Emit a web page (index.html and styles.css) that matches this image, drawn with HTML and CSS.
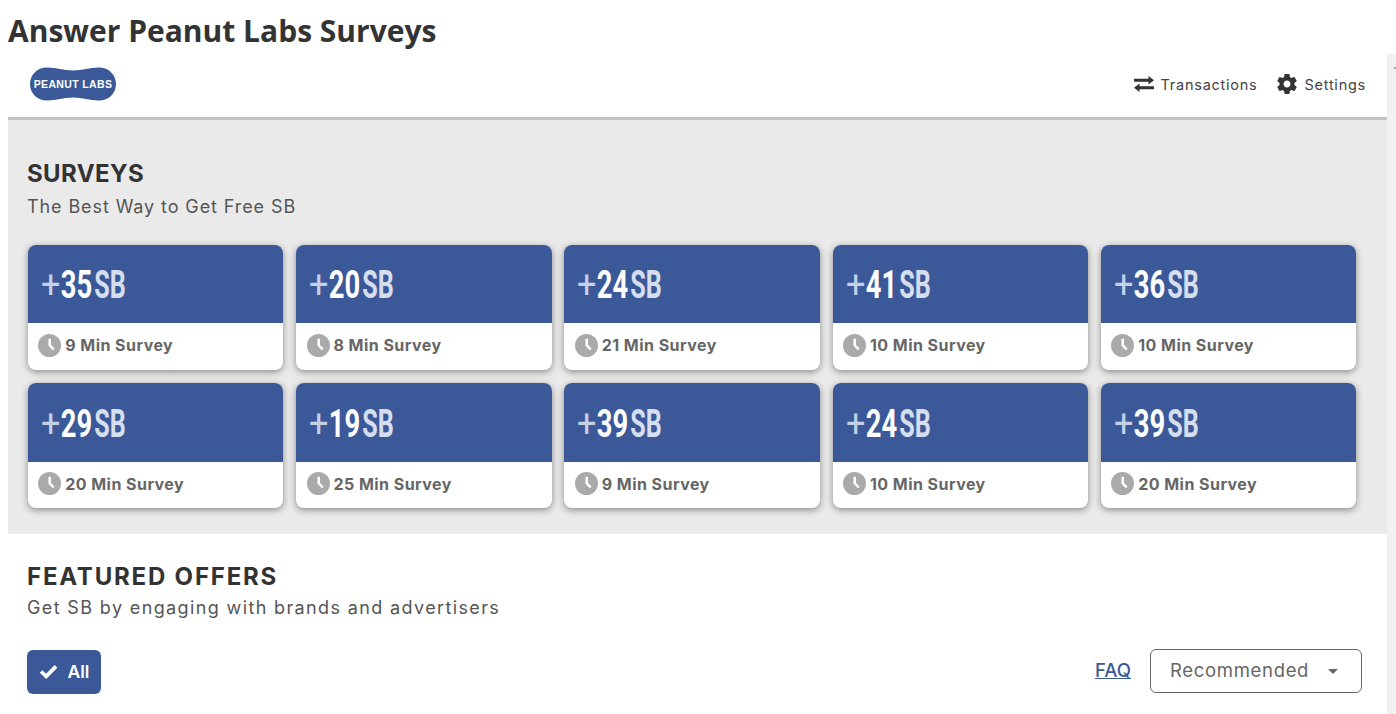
FILE: index.html
```html
<!DOCTYPE html>
<html lang="en">
<head>
<meta charset="utf-8">
<title>Answer Peanut Labs Surveys</title>
<link rel="stylesheet" href="styles.css">
</head>
<body>
<h1 class="page-title">Answer Peanut Labs Surveys</h1>
<div class="frame">
  <div class="frame-main">
    <header class="topbar">
      <svg class="logo" viewBox="0 0 86 34" role="img" aria-label="Peanut Labs">
        <path class="logo-shape" d="M17 0.5C27 0.5 33 3.5 43 3.5C53 3.5 59 0.5 69 0.5C79 0.5 86 8 86 17C86 26 79 33.5 69 33.5C59 33.5 53 30.5 43 30.5C33 30.5 27 33.5 17 33.5C7 33.5 0 26 0 17C0 8 7 0.5 17 0.5Z"/>
        <text class="logo-text" x="43" y="20.5" text-anchor="middle">PEANUT LABS</text>
      </svg>
      <nav class="topnav">
        <a class="topnav-link">
          <svg class="topnav-icon" viewBox="0 0 20 16"><path d="M14.5 0L20 4.3L14.5 8.6V5.8H0V2.8H14.5ZM5.5 7.4V10.2H20V13.2H5.5V16L0 11.7Z"/></svg>
          Transactions
        </a>
        <a class="topnav-link">
          <svg class="topnav-icon gear" viewBox="0 0 24 24"><path d="M19.43 12.98c.04-.32.07-.64.07-.98s-.03-.66-.07-.98l2.11-1.65c.19-.15.24-.42.12-.64l-2-3.46c-.12-.22-.39-.3-.61-.22l-2.49 1c-.52-.4-1.08-.73-1.69-.98l-.38-2.65C14.46 2.18 14.25 2 14 2h-4c-.25 0-.46.18-.49.42l-.38 2.65c-.61.25-1.17.59-1.69.98l-2.49-1c-.23-.09-.49 0-.61.22l-2 3.46c-.13.22-.07.49.12.64l2.11 1.65c-.04.32-.07.65-.07.98s.03.66.07.98l-2.11 1.65c-.19.15-.24.42-.12.64l2 3.46c.12.22.39.3.61.22l2.49-1c.52.4 1.08.73 1.69.98l.38 2.65c.03.24.24.42.49.42h4c.25 0 .46-.18.49-.42l.38-2.65c.61-.25 1.17-.59 1.69-.98l2.49 1c.23.09.49 0 .61-.22l2-3.46c.12-.22.07-.49-.12-.64l-2.11-1.65zM12 15.5c-1.93 0-3.5-1.57-3.5-3.5s1.57-3.5 3.5-3.5 3.5 1.57 3.5 3.5-1.57 3.5-3.5 3.5z"/></svg>
          Settings
        </a>
      </nav>
    </header>

    <section class="surveys">
      <h2 class="section-title">SURVEYS</h2>
      <p class="section-sub">The Best Way to Get Free SB</p>
      <div class="survey-grid">
        <article class="card"><div class="card-top"><div class="amount"><span class="plus">+</span><span class="num">35</span><span class="unit">SB</span></div></div><div class="card-bottom"><svg class="clock" viewBox="0 0 22 22"><circle cx="11" cy="11" r="11"/><path d="M10 4.6h2.4v5.8l3.5 3.6-1.7 1.6-4.2-4.3z"/></svg>9 Min Survey</div></article>
        <article class="card"><div class="card-top"><div class="amount"><span class="plus">+</span><span class="num">20</span><span class="unit">SB</span></div></div><div class="card-bottom"><svg class="clock" viewBox="0 0 22 22"><circle cx="11" cy="11" r="11"/><path d="M10 4.6h2.4v5.8l3.5 3.6-1.7 1.6-4.2-4.3z"/></svg>8 Min Survey</div></article>
        <article class="card"><div class="card-top"><div class="amount"><span class="plus">+</span><span class="num">24</span><span class="unit">SB</span></div></div><div class="card-bottom"><svg class="clock" viewBox="0 0 22 22"><circle cx="11" cy="11" r="11"/><path d="M10 4.6h2.4v5.8l3.5 3.6-1.7 1.6-4.2-4.3z"/></svg>21 Min Survey</div></article>
        <article class="card"><div class="card-top"><div class="amount"><span class="plus">+</span><span class="num">41</span><span class="unit">SB</span></div></div><div class="card-bottom"><svg class="clock" viewBox="0 0 22 22"><circle cx="11" cy="11" r="11"/><path d="M10 4.6h2.4v5.8l3.5 3.6-1.7 1.6-4.2-4.3z"/></svg>10 Min Survey</div></article>
        <article class="card"><div class="card-top"><div class="amount"><span class="plus">+</span><span class="num">36</span><span class="unit">SB</span></div></div><div class="card-bottom"><svg class="clock" viewBox="0 0 22 22"><circle cx="11" cy="11" r="11"/><path d="M10 4.6h2.4v5.8l3.5 3.6-1.7 1.6-4.2-4.3z"/></svg>10 Min Survey</div></article>
        <article class="card"><div class="card-top"><div class="amount"><span class="plus">+</span><span class="num">29</span><span class="unit">SB</span></div></div><div class="card-bottom"><svg class="clock" viewBox="0 0 22 22"><circle cx="11" cy="11" r="11"/><path d="M10 4.6h2.4v5.8l3.5 3.6-1.7 1.6-4.2-4.3z"/></svg>20 Min Survey</div></article>
        <article class="card"><div class="card-top"><div class="amount"><span class="plus">+</span><span class="num">19</span><span class="unit">SB</span></div></div><div class="card-bottom"><svg class="clock" viewBox="0 0 22 22"><circle cx="11" cy="11" r="11"/><path d="M10 4.6h2.4v5.8l3.5 3.6-1.7 1.6-4.2-4.3z"/></svg>25 Min Survey</div></article>
        <article class="card"><div class="card-top"><div class="amount"><span class="plus">+</span><span class="num">39</span><span class="unit">SB</span></div></div><div class="card-bottom"><svg class="clock" viewBox="0 0 22 22"><circle cx="11" cy="11" r="11"/><path d="M10 4.6h2.4v5.8l3.5 3.6-1.7 1.6-4.2-4.3z"/></svg>9 Min Survey</div></article>
        <article class="card"><div class="card-top"><div class="amount"><span class="plus">+</span><span class="num">24</span><span class="unit">SB</span></div></div><div class="card-bottom"><svg class="clock" viewBox="0 0 22 22"><circle cx="11" cy="11" r="11"/><path d="M10 4.6h2.4v5.8l3.5 3.6-1.7 1.6-4.2-4.3z"/></svg>10 Min Survey</div></article>
        <article class="card"><div class="card-top"><div class="amount"><span class="plus">+</span><span class="num">39</span><span class="unit">SB</span></div></div><div class="card-bottom"><svg class="clock" viewBox="0 0 22 22"><circle cx="11" cy="11" r="11"/><path d="M10 4.6h2.4v5.8l3.5 3.6-1.7 1.6-4.2-4.3z"/></svg>20 Min Survey</div></article>
      </div>
    </section>

    <section class="offers">
      <h2 class="section-title section-title-wide">FEATURED OFFERS</h2>
      <p class="section-sub section-sub-wide">Get SB by engaging with brands and advertisers</p>
      <div class="offers-bar">
        <button class="all-btn">
          <svg class="check" viewBox="0 0 20 16"><path d="M2 8L7.5 13.2L18 2.6"/></svg>
          All
        </button>
        <div class="offers-right">
          <a class="faq">FAQ</a>
          <div class="sort">Recommended<span class="caret"></span></div>
        </div>
      </div>
    </section>
  </div>
  <div class="scrollbar"><span class="scroll-up"></span></div>
</div>
</body>
</html>
```
FILE: styles.css
```css
* { box-sizing: border-box; }
html, body { margin: 0; height: 714px; overflow: hidden; background: #fff; }
body { padding-left: 8px; font-family: "Inter", "Liberation Sans", sans-serif; color: #333; }
.page-title {
  margin: 0;
  height: 54px;
  padding-top: 11px;
  font: 700 30px/40px "Open Sans", sans-serif;
  color: #333;
}
.frame { display: flex; height: 660px; }
.frame-main { width: 1379px; flex: none; }
.scrollbar { width: 9px; flex: none; background: #f1f1f1; position: relative; overflow: hidden; }
.scroll-up {
  position: absolute; left: 6px; top: 11px;
  border-left: 4px solid transparent; border-right: 4px solid transparent;
  border-bottom: 4px solid #a3a3a3;
}
.topbar {
  height: 66px;
  border-bottom: 3px solid #c3c3c3;
  display: flex;
  justify-content: space-between;
  padding: 13px 21px 0 22px;
}
.logo { width: 86px; height: 34px; display: block; }
.logo-shape { fill: #3b5998; }
.logo-text { fill: #fff; font: 700 10.5px "Liberation Sans", sans-serif; letter-spacing: .35px; }
.topnav { display: flex; gap: 20px; padding-top: 5px; }
.topnav-link { display: flex; align-items: center; gap: 7px; height: 24px; font-size: 14.5px; font-weight: 400; color: #444; letter-spacing: .75px; }
.topnav-icon { width: 20px; height: 16px; fill: #333; flex: none; }
.topnav-icon.gear { width: 24px; height: 24px; margin: 0 -2px 0 -2px; }
.surveys { background: #eaeaea; height: 414px; padding: 39px 19px 0 19.75px; }
.section-title { margin: 0; font: 700 24px/30px "Inter", sans-serif; color: #333; letter-spacing: .4px; margin-left: -.75px; }
.section-title-wide { letter-spacing: 1.8px; margin-left: 0; }
.section-sub { margin: 7px 0 0 -.75px; font-size: 18px; line-height: 22px; color: #555; letter-spacing: .9px; }
.section-sub-wide { letter-spacing: 1.37px; margin: 5px 0 0; }
.survey-grid {
  display: grid;
  grid-template-columns: repeat(5, 255.5px);
  column-gap: 12.75px;
  row-gap: 13.4px;
  margin-top: 27px;
}
.card { height: 125px; border-radius: 8px; background: #fff; overflow: hidden; box-shadow: 0 2px 7px rgba(0,0,0,.42); }
.card-top {
  height: 78.25px;
  background: #3b5998;
  display: flex;
  align-items: center;
  padding: 2px 0 0 13px;
}
.amount {
  display: flex;
  align-items: center;
  font: 700 38px/1 "Roboto", "Liberation Sans", sans-serif;
  transform: scaleX(.72);
  transform-origin: left center;
  white-space: nowrap;
}
.plus { color: #c5d0e6; font-weight: 400; margin-right: 6px; transform: scaleX(1.25); transform-origin: left center; }
.num { color: #fff; margin-right: 3px; }
.unit { color: #d6deee; transform: scaleX(.92); transform-origin: left center; }
.card-bottom {
  height: 46.75px;
  display: flex;
  align-items: center;
  gap: 4px;
  padding: 0 0 3px 10.5px;
  font-size: 16px;
  font-weight: 700;
  color: #666;
  letter-spacing: .45px;
}
.clock { width: 23px; height: 23px; flex: none; }
.clock circle { fill: #aaa; }
.clock path { fill: #fff; }
.offers { padding: 28px 19px 0; }
.offers-bar { display: flex; justify-content: space-between; align-items: flex-start; margin-top: 31px; padding-right: 6px; }
.all-btn {
  width: 74px; height: 44px;
  border: none; border-radius: 6px;
  background: #3b5998; color: #fff;
  display: flex; align-items: center; justify-content: center; gap: 10px;
  font: 600 17.5px "Inter", sans-serif;
  padding: 0 0 2px;
}
.check { width: 19px; height: 15px; fill: none; stroke: #fff; stroke-width: 4; }
.offers-right { display: flex; align-items: center; gap: 19px; margin-top: -1px; }
.faq { font-size: 18.5px; font-weight: 500; color: #3b5998; text-decoration: underline; margin-bottom: 2px; }
.sort {
  width: 212px; height: 44px;
  border: 1px solid #666; border-radius: 6px;
  display: flex; align-items: center; justify-content: space-between;
  padding: 0 23px 2px 19px;
  font-size: 18.5px; color: #666;
  letter-spacing: .68px;
}
.caret { border-left: 5px solid transparent; border-right: 5px solid transparent; border-top: 5px solid #666; margin-top: 2px; }
```
